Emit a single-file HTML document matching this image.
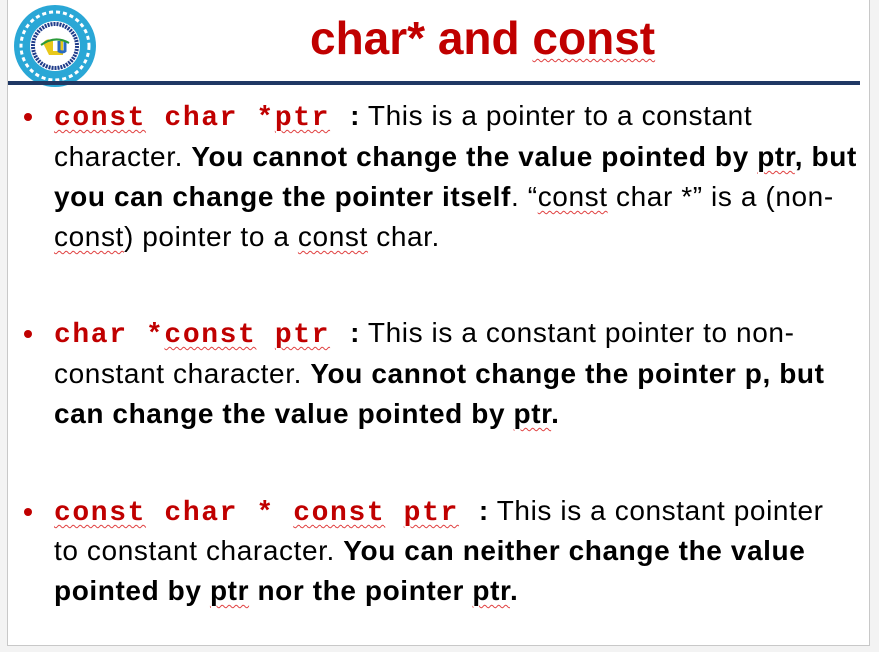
<!DOCTYPE html>
<html><head><meta charset="utf-8"><style>
*{margin:0;padding:0}
body{width:879px;height:652px;background:#f3f3f3;position:relative;overflow:hidden;font-family:"Liberation Sans",sans-serif}
#slide{position:absolute;left:7px;top:-1px;width:861px;height:645px;background:#fff;border:1px solid #c8c8c8}
.t{position:absolute;left:310px;top:11px;font-weight:bold;color:#c00000;font-size:46px;white-space:nowrap}
.bar{position:absolute;left:8px;top:81px;width:852px;height:4px;background:#1f3864}
.l{position:absolute;left:54px;font-size:28px;letter-spacing:0.6px;line-height:40px;white-space:nowrap;color:#000}
.c{font-family:"Liberation Mono",monospace;font-weight:bold;color:#c00000;font-size:28px;letter-spacing:1.6px}
.s{text-decoration:underline wavy #e04040;text-decoration-thickness:1px;text-underline-offset:4px}
.b{position:absolute;left:24px;width:8px;height:8px;border-radius:50%;background:#c00000}
.g{display:inline-block;width:20px}
</style></head><body>
<div id="slide"></div>
<svg style="position:absolute;left:13px;top:4px" width="84" height="84" viewBox="0 0 84 84">
<circle cx="42" cy="42" r="41" fill="#2aa7d6"/>
<circle cx="42" cy="42" r="25" fill="#fff"/>
<circle cx="42" cy="42" r="22" fill="none" stroke="#1f3c8a" stroke-width="4" stroke-dasharray="2 1"/>
<circle cx="42" cy="42" r="34" fill="none" stroke="#fff" stroke-width="3" stroke-dasharray="4 3"/>
<path d="M30 39 q4-6 10-2 v10 h6 v-10 h4 v14 h-14z" fill="#e8c81a"/>
<path d="M46 37 v10 q4 2 6 0 v-10" fill="none" stroke="#2a6ac0" stroke-width="3"/>
<path d="M28 41 q14-10 28-2" fill="none" stroke="#2a9a3a" stroke-width="2"/>
</svg>
<div class="t">char* and <span class="s">const</span></div>
<div class="bar"></div>

<div class="b" style="top:113px"></div>
<div class="l" style="top:96px"><span class="c"><span class="s">const</span> char *<span class="s">ptr</span></span><span class="g"></span><b>:</b> This is a pointer to a constant</div>
<div class="l" style="top:137px">character. <b>You cannot change the value pointed by <span class="s">ptr</span>, but</b></div>
<div class="l" style="top:177px"><b>you can change the pointer itself</b>. “<span class="s">const</span> char *” is a (non-</div>
<div class="l" style="top:217px"><span class="s">const</span>) pointer to a <span class="s">const</span> char.</div>

<div class="b" style="top:330px"></div>
<div class="l" style="top:313px"><span class="c">char *<span class="s">const</span> <span class="s">ptr</span></span><span class="g"></span><b>:</b> This is a constant pointer to non-</div>
<div class="l" style="top:354px">constant character. <b>You cannot change the pointer p, but</b></div>
<div class="l" style="top:394px"><b>can change the value pointed by <span class="s">ptr</span>.</b></div>

<div class="b" style="top:508px"></div>
<div class="l" style="top:491px"><span class="c"><span class="s">const</span> char * <span class="s">const</span> <span class="s">ptr</span></span><span class="g"></span><b>:</b> This is a constant pointer</div>
<div class="l" style="top:531px">to constant character. <b>You can neither change the value</b></div>
<div class="l" style="top:571px"><b>pointed by <span class="s">ptr</span> nor the pointer <span class="s">ptr</span>.</b></div>
</body></html>
